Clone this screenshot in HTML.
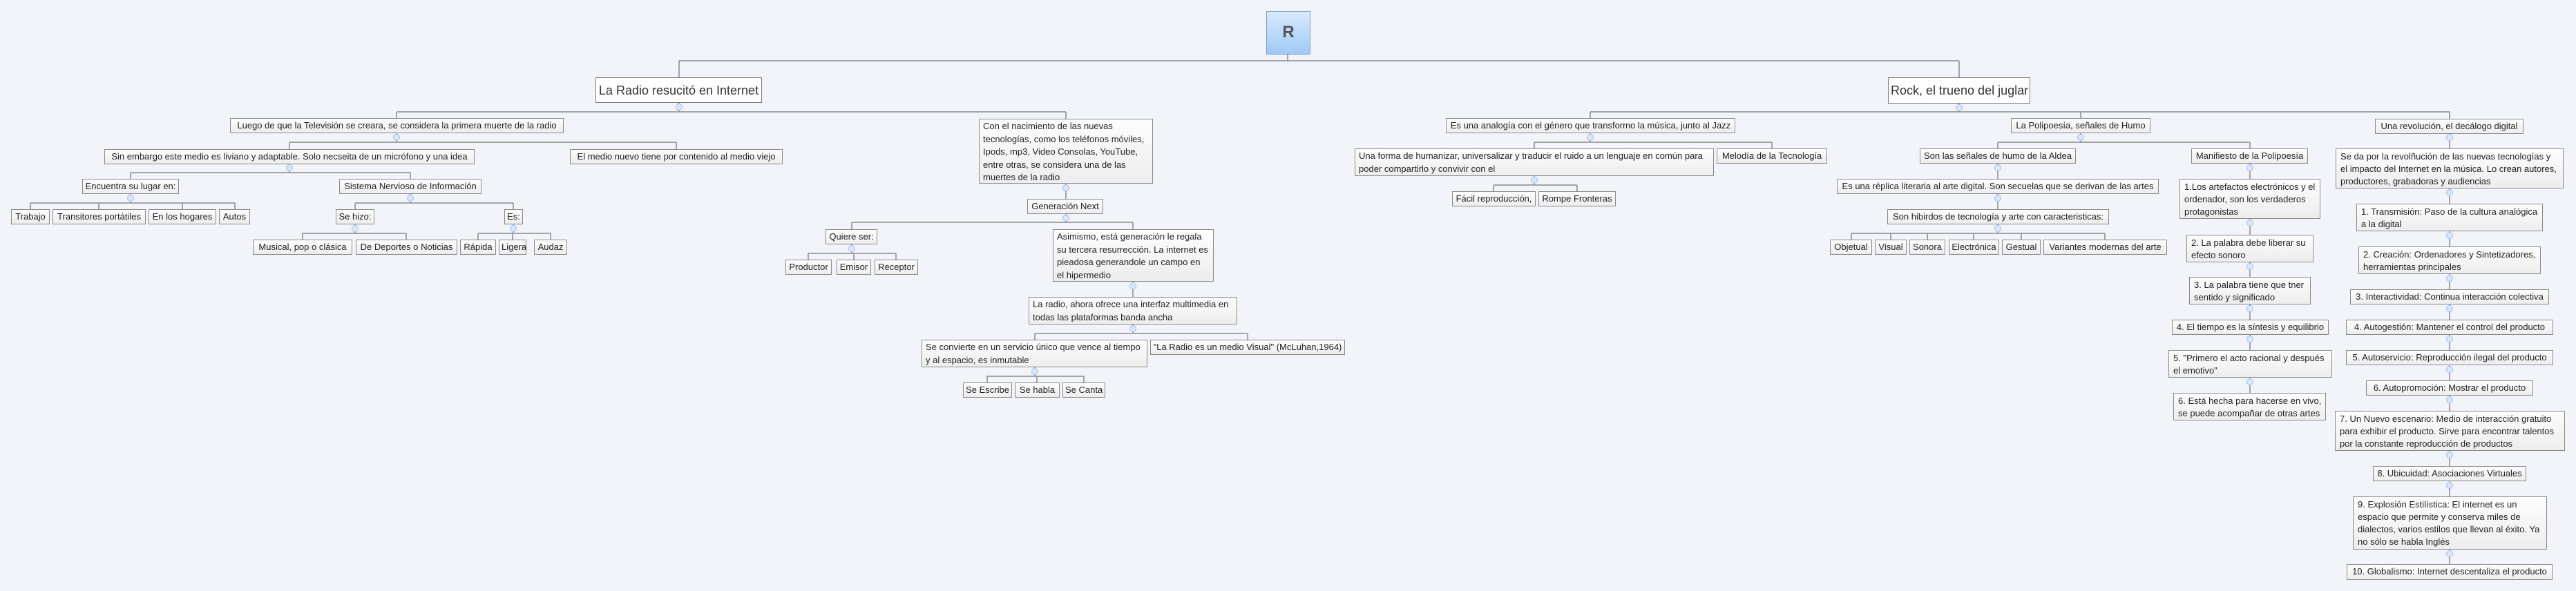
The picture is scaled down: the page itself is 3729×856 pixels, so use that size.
<!DOCTYPE html>
<html><head><meta charset="utf-8">
<style>
html,body{margin:0;padding:0}
body{width:3729px;height:856px;background:#f3f4f9;position:relative;overflow:hidden;font-family:"Liberation Sans",sans-serif;color:#222}
.n{position:absolute;box-sizing:border-box;border:1px solid #8a8a8a;background:linear-gradient(#fdfdfd,#ededed);font-size:13px;line-height:20px;padding:0 3px;white-space:nowrap;text-align:center;overflow:visible}
.m{text-align:left;line-height:18.5px;padding:1px 5px;white-space:nowrap}
.t{background:#fff;font-size:18px;color:#333;line-height:36px;border-color:#7a7a7a}
.r{text-align:left;line-height:18px;padding:2px 6px}
svg{position:absolute;left:0;top:0}
</style></head><body>
<svg width="3729" height="856" stroke="#8a8a8a" stroke-width="1.5" fill="none">
<path d="M1864 78V88M983 88H2836M983 88V112M2836 88V112"/>
<path d="M983 149V162M574 162H1543M574 162V171M1543 162V172"/>
<path d="M574 193V206M419 206H979M419 206V216M979 206V216"/>
<path d="M419 237V250M189 250H594M189 250V259M594 250V259"/>
<path d="M189 281V294M44 294H340M44 294V303M143 294V303M264 294V303M340 294V303"/>
<path d="M594 281V294M514 294H743M514 294V303M743 294V303"/>
<path d="M514 325V338M438 338H588M438 338V347M588 338V347"/>
<path d="M743 325V338M692 338H797M692 338V347M742 338V347M797 338V347"/>
<path d="M1543 266V288M1543 310V322M1233 322H1640M1233 322V332M1640 322V332"/>
<path d="M1233 354V367M1170 367H1297M1170 367V376M1236 367V376M1297 367V376"/>
<path d="M1640 408V430M1640 470V483M1498 483H1806M1498 483V492M1806 483V492"/>
<path d="M1498 532V545M1429 545H1569M1429 545V554M1501 545V554M1569 545V554"/>
<path d="M2836 150V162M2302 162H3546M2302 162V171M3012 162V171M3546 162V172"/>
<path d="M2302 193V206M2221 206H2565M2221 206V215M2565 206V215"/>
<path d="M2221 255V268M2162 268H2283M2162 268V277M2283 268V277"/>
<path d="M3012 193V206M2892 206H3257M2892 206V215M3257 206V215"/>
<path d="M2892 237V259M2892 281V303M2892 325V338M2680 338H3047M2680 338V347M2737 338V347M2790 338V347M2857 338V347M2926 338V347M3047 338V347"/>
<path d="M3257 237V569"/>
<path d="M3546 193V817"/>
<g fill="#dbe6fb" stroke="#a3bfeb" stroke-width="1">
<circle cx="983" cy="155" r="4.5"/><circle cx="574" cy="199" r="4.5"/><circle cx="419" cy="243" r="4.5"/>
<circle cx="189" cy="287" r="4.5"/><circle cx="594" cy="287" r="4.5"/><circle cx="514" cy="331" r="4.5"/><circle cx="743" cy="331" r="4.5"/>
<circle cx="1543" cy="272" r="4.5"/><circle cx="1543" cy="316" r="4.5"/><circle cx="1233" cy="360" r="4.5"/><circle cx="1640" cy="414" r="4.5"/>
<circle cx="1640" cy="476" r="4.5"/><circle cx="1498" cy="538" r="4.5"/>
<circle cx="2836" cy="156" r="4.5"/><circle cx="2302" cy="199" r="4.5"/><circle cx="2221" cy="261" r="4.5"/><circle cx="3012" cy="199" r="4.5"/>
<circle cx="2892" cy="243" r="4.5"/><circle cx="2892" cy="287" r="4.5"/><circle cx="2892" cy="331" r="4.5"/>
<circle cx="3257" cy="243" r="4.5"/><circle cx="3257" cy="323" r="4.5"/><circle cx="3257" cy="386" r="4.5"/><circle cx="3257" cy="447" r="4.5"/><circle cx="3257" cy="491" r="4.5"/><circle cx="3257" cy="553" r="4.5"/>
<circle cx="3546" cy="199" r="4.5"/><circle cx="3546" cy="279" r="4.5"/><circle cx="3546" cy="341" r="4.5"/><circle cx="3546" cy="403" r="4.5"/><circle cx="3546" cy="447" r="4.5"/><circle cx="3546" cy="491" r="4.5"/><circle cx="3546" cy="535" r="4.5"/><circle cx="3546" cy="579" r="4.5"/><circle cx="3546" cy="659" r="4.5"/><circle cx="3546" cy="703" r="4.5"/><circle cx="3546" cy="802" r="4.5"/>
</g>
</svg>

<div class="n" style="left:1833px;top:16px;width:64px;height:63px;background:linear-gradient(#d9eafc,#9fcaf6);border-color:#7d9fc4;font-size:24px;font-weight:bold;color:#555;line-height:60px">R</div>

<div class="n t" style="left:862px;top:112px;width:241px;height:37px">La Radio resucitó en Internet</div>
<div class="n t" style="left:2733px;top:112px;width:206px;height:38px">Rock, el trueno del juglar</div>

<div class="n" style="left:333px;top:171px;width:483px;height:22px">Luego de que la Televisión se creara, se considera la primera muerte de la radio</div>
<div class="n" style="left:151px;top:216px;width:536px;height:22px">Sin embargo este medio es liviano y adaptable. Solo necseita de un micrófono y una idea</div>
<div class="n" style="left:825px;top:216px;width:308px;height:22px">El medio nuevo tiene por contenido al medio viejo</div>
<div class="n" style="left:119px;top:259px;width:140px;height:22px">Encuentra su lugar en:</div>
<div class="n" style="left:491px;top:259px;width:206px;height:22px">Sistema Nervioso de Información</div>
<div class="n" style="left:16px;top:303px;width:56px;height:22px">Trabajo</div>
<div class="n" style="left:76px;top:303px;width:135px;height:22px">Transitores portátiles</div>
<div class="n" style="left:215px;top:303px;width:98px;height:22px">En los hogares</div>
<div class="n" style="left:317px;top:303px;width:45px;height:22px">Autos</div>
<div class="n" style="left:486px;top:303px;width:56px;height:22px">Se hizo:</div>
<div class="n" style="left:730px;top:303px;width:27px;height:22px">Es:</div>
<div class="n" style="left:366px;top:347px;width:144px;height:22px">Musical, pop o clásica</div>
<div class="n" style="left:515px;top:347px;width:147px;height:22px">De Deportes o Noticias</div>
<div class="n" style="left:666px;top:347px;width:52px;height:22px">Rápida</div>
<div class="n" style="left:722px;top:347px;width:40px;height:22px">Ligera</div>
<div class="n" style="left:773px;top:347px;width:48px;height:22px">Audaz</div>

<div class="n m" style="left:1417px;top:172px;width:252px;height:94px">Con el nacimiento de las nuevas<br>tecnologías, como los teléfonos móviles,<br>Ipods, mp3, Video Consolas, YouTube,<br>entre otras, se considera una de las<br>muertes de la radio</div>
<div class="n" style="left:1487px;top:288px;width:110px;height:22px">Generación Next</div>
<div class="n" style="left:1195px;top:332px;width:75px;height:22px">Quiere ser:</div>
<div class="n" style="left:1137px;top:376px;width:67px;height:22px">Productor</div>
<div class="n" style="left:1211px;top:376px;width:50px;height:22px">Emisor</div>
<div class="n" style="left:1266px;top:376px;width:63px;height:22px">Receptor</div>
<div class="n m" style="left:1524px;top:332px;width:233px;height:76px">Asimismo, está generación le regala<br>su tercera resurrección. La internet es<br>pieadosa generandole un campo en<br>el hipermedio</div>
<div class="n m" style="left:1489px;top:430px;width:302px;height:40px">La radio, ahora ofrece una interfaz multimedia en<br>todas las plataformas banda ancha</div>
<div class="n m" style="left:1334px;top:492px;width:327px;height:40px">Se convierte en un servicio único que vence al tiempo<br>y al espacio, es inmutable</div>
<div class="n" style="left:1665px;top:492px;width:282px;height:22px">"La Radio es un medio Visual" (McLuhan,1964)</div>
<div class="n" style="left:1394px;top:554px;width:71px;height:22px">Se Escribe</div>
<div class="n" style="left:1469px;top:554px;width:65px;height:22px">Se habla</div>
<div class="n" style="left:1538px;top:554px;width:62px;height:22px">Se Canta</div>

<div class="n" style="left:2093px;top:171px;width:419px;height:22px">Es una analogía con el género que transformo la música, junto al Jazz</div>
<div class="n m" style="left:1961px;top:215px;width:520px;height:40px">Una forma de humanizar, universalizar y traducir el ruido a un lenguaje en común para<br>poder compartirlo y convivir con el</div>
<div class="n" style="left:2485px;top:215px;width:160px;height:22px">Melodía de la Tecnología</div>
<div class="n" style="left:2102px;top:277px;width:121px;height:22px">Fácil reproducción,</div>
<div class="n" style="left:2227px;top:277px;width:112px;height:22px">Rompe Fronteras</div>

<div class="n" style="left:2911px;top:171px;width:202px;height:22px">La Polipoesía, señales de Humo</div>
<div class="n" style="left:2779px;top:215px;width:226px;height:22px">Son las señales de humo de la Aldea</div>
<div class="n" style="left:2659px;top:259px;width:466px;height:22px">Es una réplica literaria al arte digital. Son secuelas que se derivan de las artes</div>
<div class="n" style="left:2732px;top:303px;width:321px;height:22px">Son hibirdos de tecnología y arte con caracteristicas:</div>
<div class="n" style="left:2649px;top:347px;width:61px;height:22px">Objetual</div>
<div class="n" style="left:2714px;top:347px;width:46px;height:22px">Visual</div>
<div class="n" style="left:2764px;top:347px;width:52px;height:22px">Sonora</div>
<div class="n" style="left:2821px;top:347px;width:73px;height:22px">Electrónica</div>
<div class="n" style="left:2898px;top:347px;width:56px;height:22px">Gestual</div>
<div class="n" style="left:2958px;top:347px;width:179px;height:22px">Variantes modernas del arte</div>

<div class="n" style="left:3172px;top:215px;width:169px;height:22px">Manifiesto de la Polipoesía</div>
<div class="n r" style="left:3155px;top:259px;width:204px;height:58px">1.Los artefactos electrónicos y el<br>ordenador, son los verdaderos<br>protagonistas</div>
<div class="n r" style="left:3165px;top:340px;width:184px;height:40px">2. La palabra debe liberar su<br>efecto sonoro</div>
<div class="n r" style="left:3169px;top:401px;width:176px;height:40px">3. La palabra tiene que tner<br>sentido y significado</div>
<div class="n" style="left:3144px;top:463px;width:227px;height:22px">4. El tiempo es la síntesis y equilibrio</div>
<div class="n r" style="left:3139px;top:507px;width:237px;height:40px">5. "Primero el acto racional y después<br>el emotivo"</div>
<div class="n r" style="left:3146px;top:569px;width:221px;height:40px">6. Está hecha para hacerse en vivo,<br>se puede acompañar de otras artes</div>

<div class="n" style="left:3438px;top:172px;width:215px;height:22px">Una revolución, el decálogo digital</div>
<div class="n r" style="left:3381px;top:215px;width:330px;height:58px">Se da por la revolñución de las nuevas tecnologías y<br>el impacto del Internet en la música. Lo crean autores,<br>productores, grabadoras y audiencias</div>
<div class="n r" style="left:3411px;top:295px;width:270px;height:40px">1. Transmisión: Paso de la cultura analógica<br>a la digital</div>
<div class="n r" style="left:3414px;top:357px;width:264px;height:40px">2. Creación: Ordenadores y Sintetizadores,<br>herramientas principales</div>
<div class="n" style="left:3402px;top:419px;width:288px;height:22px">3. Interactividad: Continua interacción colectiva</div>
<div class="n" style="left:3396px;top:463px;width:300px;height:22px">4. Autogestión: Mantener el control del producto</div>
<div class="n" style="left:3396px;top:507px;width:300px;height:22px">5. Autoservicio: Reproducción ilegal del producto</div>
<div class="n" style="left:3425px;top:551px;width:242px;height:22px">6. Autopromoción: Mostrar el producto</div>
<div class="n r" style="left:3380px;top:595px;width:333px;height:58px">7. Un Nuevo escenario: Medio de interacción gratuito<br>para exhibir el producto. Sirve para encontrar talentos<br>por la constante reproducción de productos</div>
<div class="n" style="left:3435px;top:675px;width:222px;height:22px">8. Ubicuidad: Asociaciones Virtuales</div>
<div class="n r" style="left:3406px;top:719px;width:281px;height:77px">9. Explosión Estilística: El internet es un<br>espacio que permite y conserva miles de<br>dialectos, varios estilos que llevan al éxito. Ya<br>no sólo se habla Inglés</div>
<div class="n" style="left:3397px;top:817px;width:298px;height:23px">10. Globalismo: Internet descentaliza el producto</div>
</body></html>
